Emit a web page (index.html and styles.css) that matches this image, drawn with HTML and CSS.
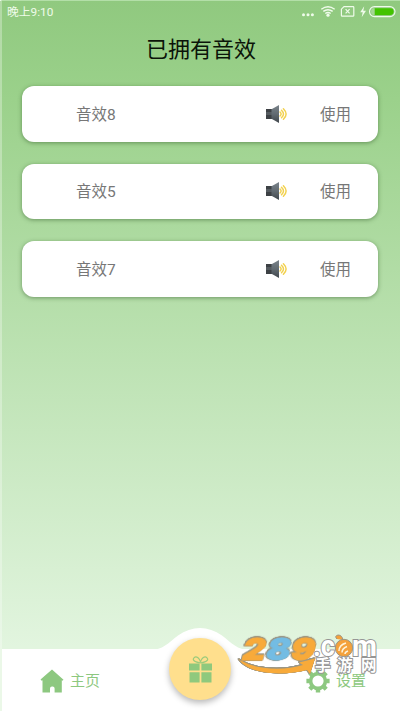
FILE: index.html
```html
<!DOCTYPE html>
<html lang="zh-CN">
<head>
<meta charset="utf-8">
<title>已拥有音效</title>
<link rel="stylesheet" href="styles.css">
</head>
<body>
<svg class="defs" width="0" height="0">
  <defs>
    <linearGradient id="cone" x1="0" y1="0" x2="0" y2="1">
      <stop offset="0" stop-color="#7a838a"/><stop offset=".5" stop-color="#626b72"/><stop offset="1" stop-color="#41474c"/>
    </linearGradient>
    <symbol id="speaker" viewBox="0 0 24 20">
      <path d="M1 5h6v10H1z" fill="#3d4145"/>
      <path d="M1 8h6v3H1z" fill="#555b60"/>
      <path d="M6.500 5.300 14 1v18L6.500 14.700z" fill="url(#cone)"/>
      <g fill="none" stroke="#f2d14f" stroke-width="1.500" stroke-linecap="round">
        <path d="M15 8q2.200 2 0 4M16.500 6.200q4 3.800 0 7.600M18.400 4.700q5.400 5.300 0 10.600"/>
      </g>
    </symbol>
  </defs>
</svg>
<div class="screen">
  <header class="status">
    <span class="time">晚上9:10</span>
    <svg class="status-icons" width="96" height="16" viewBox="0 0 96 16">
      <g fill="#effbea">
        <circle cx="3.500" cy="10.700" r="1.500"/><circle cx="8" cy="10.700" r="1.500"/><circle cx="12.400" cy="10.700" r="1.500"/>
        <circle cx="28" cy="11.200" r="1.600"/>
        <path d="M64.200 2.200 60.200 8.200h2.500l-1 5 4.300-6.400h-2.700z"/>
      </g>
      <g fill="none" stroke="#effbea" stroke-width="1.400">
        <path d="M21.300 5.200q6.700-5 13.400 0M23.300 7.400q4.700-3.400 9.400 0M25.300 9.500q2.700-2 5.400 0"/>
        <path stroke-width="1.200" d="M44 2.600h9q.8 0 .8.800v8q0 .8-.8.800H42.200q-.8 0-.8-.8V5.200z"/>
        <path stroke-width="1.200" d="m45.600 5.200 4 4.200m0-4.200-4 4.200"/>
        <rect x="69.500" y="2.600" width="25.500" height="10" rx="5" stroke-width="1.100"/>
      </g>
      <path d="M74.500 4.200h15.700a3.400 3.400 0 0 1 0 6.800H74.500z" fill="#43c300"/>
      <path d="M74.500 4.200v6.800a3.400 3.400 0 0 1 0-6.800z" fill="#a5d694"/>
    </svg>
  </header>
  <h1 class="title">已拥有音效</h1>
  <main class="list">
    <article class="card"><span class="name">音效8</span><svg class="speaker"><use href="#speaker"/></svg><span class="use">使用</span></article>
    <article class="card"><span class="name">音效5</span><svg class="speaker"><use href="#speaker"/></svg><span class="use">使用</span></article>
    <article class="card"><span class="name">音效7</span><svg class="speaker"><use href="#speaker"/></svg><span class="use">使用</span></article>
  </main>
  <nav class="nav">
    <svg class="bump" width="100" height="23" viewBox="0 0 100 23"><path d="M0 23C13 23 18 16 28 8.500 42-1.500 58-1.500 72 8.500 82 16 87 23 100 23z" fill="#fff"/></svg>
    <a class="tab home">
      <svg width="24" height="24" viewBox="0 0 24 24"><path d="M12 .5 23.500 10.700l-1 1-.7-.4V23.500H14.600V19.500q0-2-2-2h-.6q-2 0-2 2v4H2.500V11.300l-.8.500L.5 10.600z" fill="#8dc880"/></svg>
      <span>主页</span>
    </a>
    <a class="gift">
      <svg width="23" height="27" viewBox="0 0 23 27">
        <path d="M0 7.500h10.600v7H0zM12.400 7.500H23v7H12.400zM.5 16.200h10.100v10.300H.5zM12.400 16.200h10.100v10.300H12.400z" fill="#8fc97d"/>
        <path d="M11.500 7C4 5.500 3.500 3.500 5 1.800c2.500-2.600 6 1.200 6.500 4.400C12 3 15.500-.8 18 1.800c1.500 1.700 1 3.700-6.500 5.200" fill="none" stroke="#9ccb7b" stroke-width="1.200"/>
      </svg>
    </a>
    <a class="tab settings">
      <svg width="24" height="24" viewBox="0 0 24 24">
        <g fill="none" stroke="#8dc880">
          <circle cx="12" cy="12" r="7.400" stroke-width="3.600"/>
          <path stroke-width="4.400" d="M12 .4v4M12 19.600v4M.4 12h4M19.600 12h4M3.800 3.800l2.900 2.900M17.300 17.300l2.900 2.900M3.800 20.200l2.900-2.900M17.300 6.700l2.900-2.900"/>
        </g>
      </svg>
      <span>设置</span>
    </a>
  </nav>
  <svg class="watermark" width="144" height="46" viewBox="0 0 144 46">
    <path class="outlined" d="M2.500 27C18 38 48 39 67 33l-4-2.500 16-4-5 15.500-3-4C48 44 13 43 2.500 27z" fill="#f8aa3a"/>
    <g class="digits outlined" transform="translate(8.500 0) skewX(-14)">
      <text x="3" y="28.500" textLength="23" lengthAdjust="spacingAndGlyphs" fill="#f8aa3a" stroke="#f8aa3a">2</text>
      <text x="27" y="28.500" textLength="24" lengthAdjust="spacingAndGlyphs" fill="#73bce3" stroke="#73bce3">8</text>
      <text x="51.500" y="28.500" textLength="24" lengthAdjust="spacingAndGlyphs" fill="#f8aa3a" stroke="#f8aa3a">9</text>
    </g>
    <g class="domain" fill="#fff" stroke="#969696">
      <text x="77" y="24" textLength="22" lengthAdjust="spacingAndGlyphs">.c</text>
      <text x="116" y="24" textLength="25" lengthAdjust="spacingAndGlyphs">m</text>
    </g>
    <g stroke="#9b9684">
      <path d="M101 7q-3-3 1-4 4 0 5 5" fill="#f4a13b"/>
      <circle cx="108" cy="16" r="8.700" fill="#f4a13b"/>
    </g>
    <path d="M103 19q0-6 7-8M106 20.500q0-4 5-6M109 22q0-2 3-3" fill="none" stroke="#fff3d8" stroke-width="1.500"/>
    <text class="site" y="39"><tspan x="79">手</tspan><tspan x="101">游</tspan><tspan x="125">网</tspan></text>
  </svg>
</div>
</body>
</html>
```

FILE: styles.css
```css
* { box-sizing: border-box; }
body { margin: 0; font-family: Roboto, "Noto Sans CJK SC", sans-serif; }
.defs { position: absolute; }
.screen {
  position: relative;
  display: flex;
  flex-direction: column;
  width: 400px;
  height: 711px;
  overflow: hidden;
  border-top: 1px solid #b3dfa8;
  border-left: 2px solid rgba(255, 255, 255, .3);
  background: linear-gradient(#90c97f, #9bd18b 14%, #e2f5df 91%);
  background-origin: border-box;
}
.status {
  display: flex;
  justify-content: space-between;
  height: 24px;
  padding: 3px 4px 0 5px;
}
.time { font-size: 11.800px; line-height: 16px; color: #effbea; }
.title {
  margin: 9px 0 0;
  height: 32px;
  font-size: 22px;
  font-weight: 400;
  line-height: 32px;
  text-align: center;
  color: #0b1409;
}
.list {
  display: flex;
  flex-direction: column;
  gap: 22px;
  flex: 1;
  padding: 20px 22px 0 20px;
}
.card {
  display: grid;
  grid-template-columns: 189px 55px 1fr;
  align-items: center;
  height: 55.600px;
  padding-left: 54px;
  border-radius: 12px;
  background: #fff;
  box-shadow: 0 1px 4px rgba(40, 80, 30, .5);
  font-size: 15.500px;
  line-height: 24px;
  color: #777;
}
.card span { padding-top: 2px; }
.speaker { width: 24px; height: 20px; }
.nav {
  position: relative;
  display: grid;
  grid-template-columns: 167px 62px 1fr;
  height: 62px;
  background: #fff;
}
.bump { position: absolute; left: 148px; top: -22px; }
.tab {
  display: flex;
  align-items: center;
  gap: 6px;
  height: 24px;
  margin-top: 20px;
  font-size: 15px;
  line-height: 24px;
  color: #8dc880;
}
.home { padding-left: 38px; }
.settings { padding-left: 75px; }
.gift {
  position: relative;
  display: flex;
  align-items: center;
  justify-content: center;
  width: 62px;
  height: 62px;
  margin-top: -11px;
  border-radius: 50%;
  background: #ffdf8d;
  box-shadow: 0 3px 6px rgba(0, 0, 0, .28);
}
.watermark { position: absolute; left: 234px; top: 631px; overflow: visible; }
.outlined {
  filter: drop-shadow(.5px 0 0 #9b9684) drop-shadow(-.5px 0 0 #9b9684) drop-shadow(0 .5px 0 #9b9684) drop-shadow(0 -.5px 0 #9b9684);
}
.digits { font: 900 31px Inter, sans-serif; stroke-width: 1px; }
.domain { font: 700 29px Roboto, sans-serif; stroke-width: 2px; paint-order: stroke; }
.site {
  font: 700 15.500px "Noto Sans CJK SC", sans-serif;
  fill: #fff;
  stroke: #969696;
  stroke-width: 2px;
  paint-order: stroke;
}
```
